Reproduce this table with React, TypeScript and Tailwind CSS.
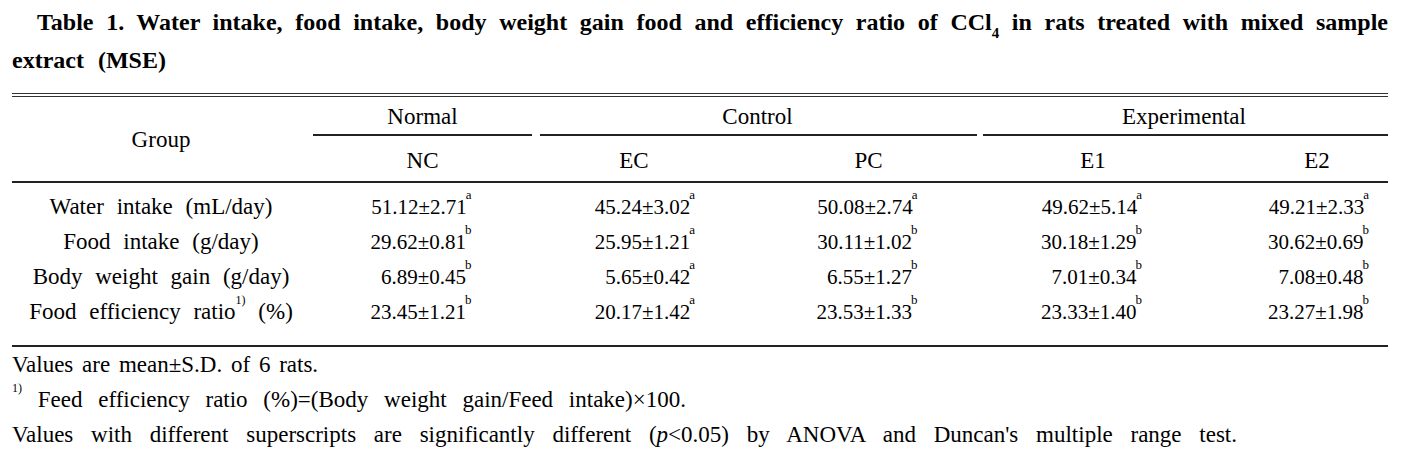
const rows: { label: React.ReactNode; vals: [string, string][] }[] = [
  {
    label: 'Water intake (mL/day)',
    vals: [
      ['51.12±2.71', 'a'],
      ['45.24±3.02', 'a'],
      ['50.08±2.74', 'a'],
      ['49.62±5.14', 'a'],
      ['49.21±2.33', 'a'],
    ],
  },
  {
    label: 'Food intake (g/day)',
    vals: [
      ['29.62±0.81', 'b'],
      ['25.95±1.21', 'a'],
      ['30.11±1.02', 'b'],
      ['30.18±1.29', 'b'],
      ['30.62±0.69', 'b'],
    ],
  },
  {
    label: 'Body weight gain (g/day)',
    vals: [
      ['6.89±0.45', 'b'],
      ['5.65±0.42', 'a'],
      ['6.55±1.27', 'b'],
      ['7.01±0.34', 'b'],
      ['7.08±0.48', 'b'],
    ],
  },
  {
    label: (
      <>
        Food efficiency ratio<sup className="text-[12px] align-[9px]">1)</sup> (%)
      </>
    ),
    vals: [
      ['23.45±1.21', 'b'],
      ['20.17±1.42', 'a'],
      ['23.53±1.33', 'b'],
      ['23.33±1.40', 'b'],
      ['23.27±1.98', 'b'],
    ],
  },
]

const cols = 'grid grid-cols-[298px_225px_222px_223px_226px_182px]'

function Value({ v, s, last }: { v: string; s: string; last?: boolean }) {
  return (
    <div className={`flex justify-center ${last ? 'pl-[40px]' : 'pr-[6px]'}`}>
      <span className="inline-block w-[104px] text-right whitespace-nowrap text-[21px]">
        {v}
        <sup className="text-[13px] align-[8px] -ml-[1px]">{s}</sup>
      </span>
    </div>
  )
}

export default function App() {
  return (
    <div className="w-[1408px] h-[453px] bg-white text-black overflow-hidden px-[12px] font-['Liberation_Serif','Times_New_Roman',serif]">
      {/* caption */}
      <div className="w-[1376px] pt-[3px] font-bold text-[24px] leading-[38px]">
        <div className="pl-[25px] text-justify [text-align-last:justify]">
          Table 1. Water intake, food intake, body weight gain food and efficiency ratio of CCl
          <sub className="text-[15px] align-[-4px]">4</sub> in rats treated with mixed sample
        </div>
        <div className="[word-spacing:8px]">extract (MSE)</div>
      </div>

      {/* table */}
      <div className="w-[1376px] mt-[14px] text-[23px]">
        <div className="h-[4px] border-y border-[#333]" />

        <div className={`${cols} h-[86px] border-b-2 border-[#222]`}>
          <div className="row-span-2 flex items-center justify-center pt-[2px]">Group</div>
          <div className="flex flex-col">
            <div className="h-[37px] pt-[4px] flex items-center justify-center">Normal</div>
            <div className="mx-[3px] border-t-2 border-[#222]" />
          </div>
          <div className="col-span-2 flex flex-col">
            <div className="h-[37px] pt-[4px] flex items-center justify-center">Control</div>
            <div className="ml-[5px] mr-[3px] border-t-2 border-[#222]" />
          </div>
          <div className="col-span-2 flex flex-col">
            <div className="h-[37px] pt-[4px] flex items-center justify-center">Experimental</div>
            <div className="ml-[3px] border-t-2 border-[#222]" />
          </div>
          <div className="flex items-center justify-center">NC</div>
          <div className="flex items-center justify-center pr-[24px]">EC</div>
          <div className="flex items-center justify-center">PC</div>
          <div className="flex items-center justify-center">E1</div>
          <div className="flex items-center justify-center pl-[40px]">E2</div>
        </div>

        <div className="pt-[7px] pb-[15px] border-b-2 border-[#222]">
          {rows.map((r, i) => (
            <div key={i} className={`${cols} h-[35px] items-center`}>
              <div className="text-center [word-spacing:7px] whitespace-nowrap">{r.label}</div>
              {r.vals.map(([v, s], j) => (
                <Value key={j} v={v} s={s} last={j === 4} />
              ))}
            </div>
          ))}
        </div>
      </div>

      {/* notes */}
      <div className="text-[23px] leading-[35px]">
        <div className="[word-spacing:3px]">Values are mean±S.D. of 6 rats.</div>
        <div className="[word-spacing:10px]">
          <sup className="text-[12px] align-[9px]">1)</sup> Feed efficiency ratio (%)=(Body weight gain/Feed intake)×100.
        </div>
        <div className="[word-spacing:12px]">
          Values with different superscripts are significantly different (<i>p</i>&lt;0.05) by ANOVA and Duncan's multiple range test.
        </div>
      </div>
    </div>
  )
}
